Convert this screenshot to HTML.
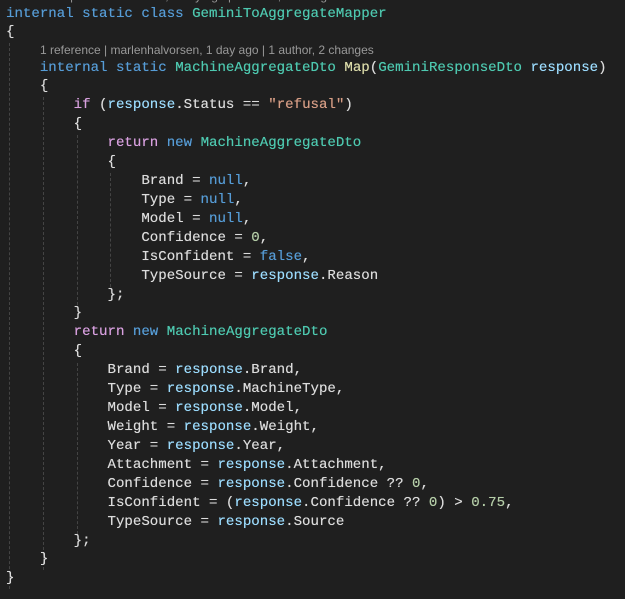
<html><head><style>
body{margin:0;background:#1f1f1f;width:625px;height:599px;overflow:hidden;position:relative}
.l{position:absolute;left:6px;height:19px;line-height:19px;font:14.1px "Liberation Mono",monospace;color:#dcdcdc;white-space:pre;text-shadow:0 0 0.4px currentColor}
.c{position:absolute;font:12px "Liberation Sans",sans-serif;color:#999;white-space:pre;line-height:17px}
.k{color:#569cd6}.p{color:#d8a0df}.t{color:#4ec9b0}.m{color:#dcdcaa}.v{color:#9cdcfe}.s{color:#d69d85}.n{color:#b5cea8}
.g{position:absolute;width:0;border-left:1px dashed #444}
</style></head><body>
<div class="c" style="left:6px;top:-12px">1 reference | marlenhalvorsen, 1 day ago | 1 author, 2 changes</div>
<div class="g" style="left:9px;top:43px;height:546px"></div>
<div class="g" style="left:43px;top:97px;height:473px"></div>
<div class="g" style="left:77px;top:135px;height:170px"></div>
<div class="g" style="left:110px;top:173px;height:114px"></div>
<div class="g" style="left:77px;top:363px;height:171px"></div>
<div class="l" style="top:5.5px"><span class="k">internal static class</span> <span class="t">GeminiToAggregateMapper</span></div>
<div class="l" style="top:24px">{</div>
<div class="c" style="left:40px;top:42px">1 reference | marlenhalvorsen, 1 day ago | 1 author, 2 changes</div>
<div id="b"></div>
<script>
var L=[
'    <span class="k">internal static</span> <span class="t">MachineAggregateDto</span> <span class="m">Map</span>(<span class="t">GeminiResponseDto</span> <span class="v">response</span>)',
'    {',
'        <span class="p">if</span> (<span class="v">response</span>.Status == <span class="s">"refusal"</span>)',
'        {',
'            <span class="p">return</span> <span class="k">new</span> <span class="t">MachineAggregateDto</span>',
'            {',
'                Brand = <span class="k">null</span>,',
'                Type = <span class="k">null</span>,',
'                Model = <span class="k">null</span>,',
'                Confidence = <span class="n">0</span>,',
'                IsConfident = <span class="k">false</span>,',
'                TypeSource = <span class="v">response</span>.Reason',
'            };',
'        }',
'        <span class="p">return</span> <span class="k">new</span> <span class="t">MachineAggregateDto</span>',
'        {',
'            Brand = <span class="v">response</span>.Brand,',
'            Type = <span class="v">response</span>.MachineType,',
'            Model = <span class="v">response</span>.Model,',
'            Weight = <span class="v">response</span>.Weight,',
'            Year = <span class="v">response</span>.Year,',
'            Attachment = <span class="v">response</span>.Attachment,',
'            Confidence = <span class="v">response</span>.Confidence ?? <span class="n">0</span>,',
'            IsConfident = (<span class="v">response</span>.Confidence ?? <span class="n">0</span>) &gt; <span class="n">0.75</span>,',
'            TypeSource = <span class="v">response</span>.Source',
'        };',
'    }',
'}'];
var h='';for(var i=0;i<L.length;i++){h+='<div class="l" style="top:'+(59.5+i*18.92)+'px">'+L[i]+'</div>';}
document.getElementById('b').innerHTML=h;
</script>
</body></html>
